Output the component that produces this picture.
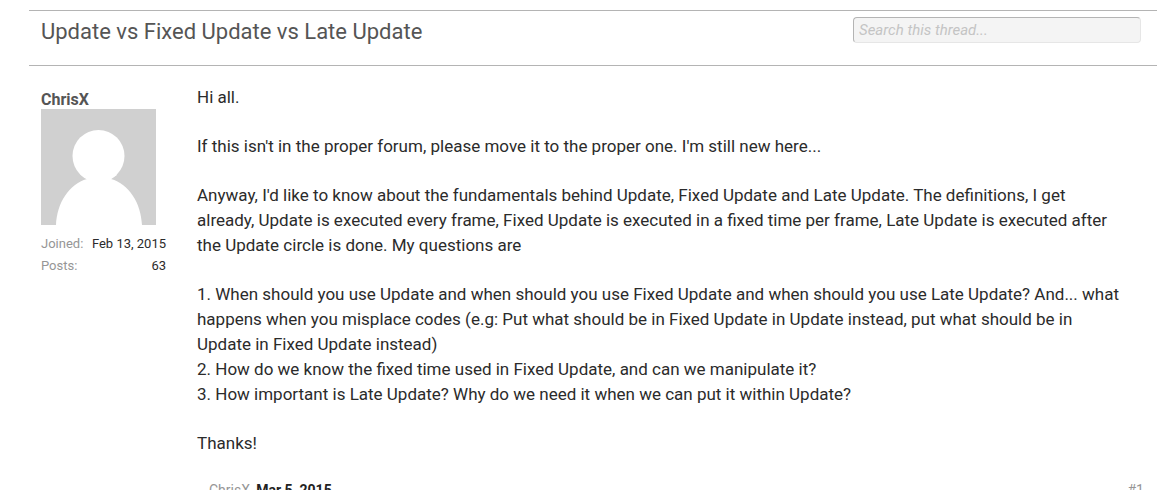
<main>
  <header>
    <h1>Update vs Fixed Update vs Late Update</h1>
    <input type="search" aria-label="Search this thread" placeholder="Search this thread..." />
  </header>
  <article>
    <aside>
      <a class="name" href="#member">ChrisX</a>
      <svg class="avatar" viewBox="0 0 115 116" role="img" aria-label="ChrisX">
        <rect width="115" height="116" fill="#d0d0d0" />
        <path d="M15 116C16 94 28 75 46 70Q43 68 40 66L76 66Q73 68 70 70C88 75 100 94 101 116Z" fill="#fff" />
        <circle cx="57.5" cy="47" r="26" fill="#fff" />
      </svg>
      <dl>
        <div><dt>Joined:</dt><dd>Feb 13, 2015</dd></div>
        <div><dt>Posts:</dt><dd>63</dd></div>
      </dl>
    </aside>
    <div class="body">
      <p>Hi all.</p>
      <p>If this isn't in the proper forum, please move it to the proper one. I'm still new here...</p>
      <p>Anyway, I'd like to know about the fundamentals behind Update, Fixed Update and Late Update. The definitions, I get already, Update is executed every frame, Fixed Update is executed in a fixed time per frame, Late Update is executed after the Update circle is done. My questions are</p>
      <p>1. When should you use Update and when should you use Fixed Update and when should you use Late Update? And... what happens when you misplace codes (e.g: Put what should be in Fixed Update in Update instead, put what should be in Update in Fixed Update instead)<br />2. How do we know the fixed time used in Fixed Update, and can we manipulate it?<br />3. How important is Late Update? Why do we need it when we can put it within Update?</p>
      <p>Thanks!</p>
      <footer>
        <span><a href="#member">ChrisX</a>, <a class="date" href="#post">Mar 5, 2015</a></span>
        <a href="#post">#1</a>
      </footer>
    </div>
  </article>
</main>

<style>
  :global(body) { background: #fff; overflow: hidden; }
  main { padding: 10px 11px 0 29px; font-family: Roboto, sans-serif; color: #2b2b2b; }
  header { display: flex; justify-content: space-between; align-items: flex-start; height: 54px; padding: 0 16px 0 12px; border: solid #b4b4b4; border-width: 1px 0; }
  h1 { margin: 0; font-size: 22px; line-height: 42px; font-weight: 400; color: #555; }
  input { box-sizing: border-box; width: 288px; height: 26px; margin-top: 6px; padding: 0 5px; border: 1px solid; border-color: #b4b4b4 #e6e6e6 #e6e6e6 #b4b4b4; border-radius: 4px; background: #f4f4f4; font: italic 15px Roboto, sans-serif; }
  input::placeholder { color: #c4c4c4; }
  article { display: flex; gap: 31px; padding: 19px 0 0 12px; }
  aside { flex: none; width: 125px; padding-top: 6px; }
  a { color: #969696; text-decoration: none; }
  .name { display: block; font-size: 16px; line-height: 18px; font-weight: 700; color: #555; }
  .avatar { display: block; width: 115px; height: 116px; }
  dl { margin: 8px 0 0; font-size: 13px; line-height: 22px; }
  dl div { display: flex; justify-content: space-between; }
  dt { color: #969696; }
  dd { margin: 0; }
  .body { flex: 1; min-width: 0; }
  p { margin: 0 30px 24px 0; font-size: 17px; line-height: 25px; }
  footer { display: flex; justify-content: space-between; padding: 0 13px 0 12px; font-size: 14px; line-height: 20px; color: #969696; }
  .date { font-weight: 700; color: #222; }
</style>
